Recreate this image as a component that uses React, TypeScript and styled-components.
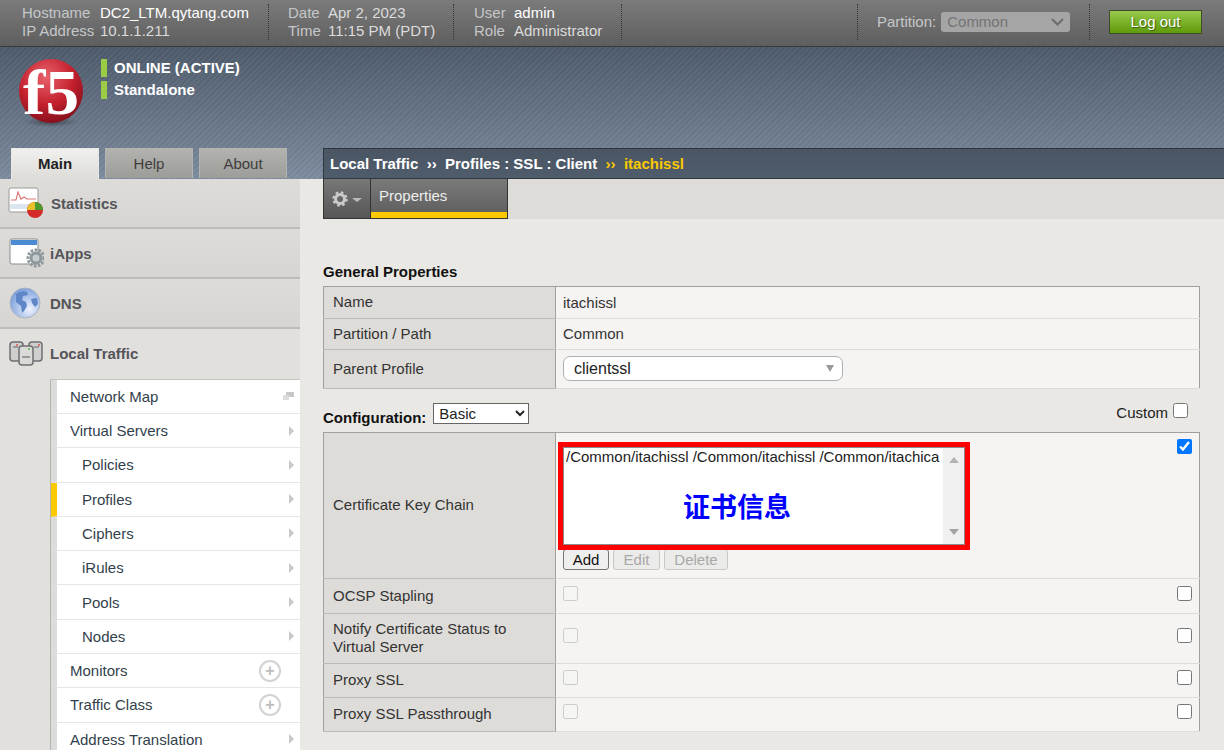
import React from 'react';
import styled, { createGlobalStyle } from 'styled-components';

const GlobalStyle = createGlobalStyle`
    html, body {
        margin: 0;
        padding: 0;
        height: 100%;
        overflow: hidden;
    }
    body {
        font-family: "Liberation Sans", Arial, sans-serif;
        font-size: 15px;
        color: #333;
    }
`;

const Page = styled.div`
    width: 1224px;
    height: 750px;
    overflow: hidden;
    display: flex;
    flex-direction: column;
    background: #e9e8e4;
`;

/* top bar */
const TopBar = styled.header`
    height: 47px;
    flex: none;
    box-sizing: border-box;
    display: flex;
    align-items: center;
    padding: 0 22px 3px 0;
    background: linear-gradient(#7b7b7b, #5e5e5e);
    border-bottom: 1px solid #3a3a3a;
    color: #d6d6d6;
`;

const InfoBlock = styled.div<{ $width: number; $pad: number; $keyWidth: number }>`
    width: ${(p) => p.$width}px;
    height: 36px;
    box-sizing: border-box;
    padding-left: ${(p) => p.$pad}px;
    border-right: 1px dotted #333;
    display: grid;
    grid-template-columns: ${(p) => p.$keyWidth}px auto;
    align-content: center;
    line-height: 18px;
    white-space: nowrap;
`;

const InfoKey = styled.span`
    color: #c4c7c9;
`;

const InfoVal = styled.span<{ $bright?: boolean }>`
    color: ${(p) => (p.$bright ? '#fff' : '#dcdcdc')};
`;

const Spacer = styled.div`
    flex: 1;
`;

const PartitionBlock = styled.div`
    width: 233px;
    height: 36px;
    box-sizing: border-box;
    padding-left: 19px;
    border-left: 1px dotted #333;
    border-right: 1px dotted #333;
    display: flex;
    align-items: center;
    gap: 5px;
    color: #c4c7c9;
`;

const PartitionSelect = styled.div`
    width: 129px;
    height: 20px;
    box-sizing: border-box;
    padding: 0 6px;
    border-radius: 3px;
    background: #a5a5a5;
    color: #747474;
    display: flex;
    align-items: center;
    justify-content: space-between;
`;

const LogoutButton = styled.button`
    width: 93px;
    height: 24px;
    margin-left: 19px;
    padding: 0;
    border: 1px solid #3f4a2b;
    background: linear-gradient(#97c94e, #5f9a08);
    color: #fff;
    font: 15px "Liberation Sans", Arial, sans-serif;
    text-shadow: 1px 1px 1px #3d5a10;
`;

/* banner */
const Banner = styled.div`
    height: 132px;
    flex: none;
    box-sizing: border-box;
    display: flex;
    flex-direction: column;
    justify-content: space-between;
    background:
        repeating-linear-gradient(135deg, rgba(255, 255, 255, 0.03) 0 2px, rgba(0, 0, 0, 0.03) 2px 4px),
        linear-gradient(#4e5b6c, #7d8c9f);
`;

const BannerTop = styled.div`
    display: flex;
    padding: 12px 0 0 18px;
`;

const StatusList = styled.div`
    margin-left: 17px;
    display: flex;
    flex-direction: column;
    gap: 4px;
`;

const StatusLine = styled.div`
    height: 18px;
    line-height: 18px;
    border-left: 6px solid #9ccc43;
    padding-left: 7px;
    color: #fff;
    font-weight: bold;
`;

const BannerBottom = styled.div`
    display: flex;
    align-items: flex-end;
`;

const Tabs = styled.nav`
    width: 323px;
    flex: none;
    box-sizing: border-box;
    padding-left: 11px;
    display: flex;
    gap: 6px;
`;

const Tab = styled.div<{ $active?: boolean }>`
    width: 88px;
    height: ${(p) => (p.$active ? 31 : 30)}px;
    box-sizing: border-box;
    text-align: center;
    line-height: 30px;
    font-size: 15px;
    border: 1px solid ${(p) => (p.$active ? '#e8e7e3' : '#b3b3af')};
    border-bottom: 0;
    background: ${(p) => (p.$active ? 'linear-gradient(#f0f0ee, #dddcd8)' : 'linear-gradient(#b2b2ae, #9c9c98)')};
    color: ${(p) => (p.$active ? '#222' : '#3e3e3e')};
    font-weight: ${(p) => (p.$active ? 'bold' : 'normal')};
`;

const Breadcrumb = styled.div`
    flex: 1;
    height: 31px;
    box-sizing: border-box;
    border: 1px solid #2e3640;
    border-right: 0;
    padding-left: 6px;
    background: linear-gradient(#4a5664, #4f5c6b);
    color: #fff;
    font-weight: bold;
    line-height: 29px;
    white-space: pre;
`;

const Current = styled.span`
    color: #fbc900;
`;

/* body */
const Body = styled.div`
    flex: 1;
    display: flex;
    min-height: 0;
`;

const Sidebar = styled.aside`
    width: 300px;
    flex: none;
    background: #e1e0dc;
`;

const NavSection = styled.div<{ $open?: boolean }>`
    height: 50px;
    box-sizing: border-box;
    display: flex;
    align-items: center;
    gap: 6px;
    padding: 0 0 ${(p) => (p.$open ? '2px' : '0')} 8px;
    border-bottom: ${(p) => (p.$open ? '0' : '2px solid #bdbcb8')};
    background: ${(p) => (p.$open ? '#e1e0dc' : 'linear-gradient(#dddcd8, #d6d5d1)')};
    color: #55545a;
    font-weight: bold;
`;

const SubNav = styled.ul`
    margin: -0.4px 0 0 50px;
    padding: 0;
    list-style: none;
    background: #fff;
    border-top: 1px solid #c4c4c4;
    border-left: 1px solid #b4b4b0;
`;

const SubItem = styled.li<{ $indent?: boolean; $selected?: boolean }>`
    height: 34.3px;
    box-sizing: border-box;
    display: flex;
    align-items: center;
    justify-content: space-between;
    padding: 0 6px 0 ${(p) => (p.$indent ? 25 : 13)}px;
    border-left: 6px solid ${(p) => (p.$selected ? '#fbc900' : '#dcdcdc')};
    border-bottom: 1px solid #e6e6e6;
    color: #333f4c;
`;

const Arrow = styled.span`
    width: 0;
    height: 0;
    border-left: 5px solid #c8c8c8;
    border-top: 5px solid transparent;
    border-bottom: 5px solid transparent;
`;

const PlusCircle = styled.span`
    width: 22px;
    height: 22px;
    margin-right: 13px;
    box-sizing: border-box;
    border: 2px solid #d2d2d2;
    border-radius: 50%;
    color: #bdbdbd;
    font-size: 16px;
    font-weight: bold;
    line-height: 17px;
    text-align: center;
`;

const Main = styled.main`
    flex: 1;
    min-width: 0;
    padding-left: 23px;
    background: #e9e8e4;
`;

const SubTabs = styled.div`
    height: 40px;
    display: flex;
    background: #dedcd8;
`;

const GearTab = styled.div`
    width: 48px;
    box-sizing: border-box;
    display: flex;
    align-items: center;
    justify-content: center;
    gap: 4px;
    background: linear-gradient(#787878, #565656);
    border: 1px solid #333;
    border-top: 0;
`;

const PropTab = styled.div`
    width: 137px;
    box-sizing: border-box;
    padding: 8px 0 0 8px;
    background: linear-gradient(#7a7a7a, #5c5c5c);
    border: 1px solid #333;
    border-top: 0;
    border-left: 0;
    box-shadow: inset 0 -6px 0 #fbc900;
    color: #eee;
    line-height: 18px;
`;

const Content = styled.div`
    width: 877px;
    padding-top: 44px;
`;

const SectionTitle = styled.div`
    height: 23px;
    line-height: 18px;
    font-weight: bold;
    color: #111;
`;

const ConfigBar = styled.div`
    height: 43px;
    display: flex;
    align-items: flex-start;
    padding-top: 14px;
    box-sizing: border-box;
`;

const ConfigLabel = styled.span`
    margin-top: 6px;
    font-weight: bold;
    color: #111;
`;

const ConfigSelect = styled.select`
    width: 96px;
    height: 21px;
    margin-left: 7px;
    padding: 0 0 0 1px;
    background: #fff;
    border: 1px solid #666;
    color: #222;
    font: 15px "Liberation Sans", Arial, sans-serif;
`;

const CustomBox = styled.label`
    margin-left: auto;
    margin-top: 1px;
    display: flex;
    align-items: center;
    color: #222;
`;

const Check = styled.input`
    width: 15px;
    height: 15px;
    margin: 0;
    display: block;
`;

const CustomCheck = styled(Check)`
    margin: -4px 12px 0 5px;
`;

const ChainCheck = styled(Check)`
    margin-top: -3px;
`;

const PropTable = styled.table`
    width: 100%;
    border-collapse: collapse;
    border: 1px solid #a0a09d;
    table-layout: fixed;
`;

const Row = styled.tr<{ $h: number }>`
    height: ${(p) => p.$h}px;
`;

const LabelCell = styled.td`
    width: 232px;
    box-sizing: border-box;
    padding: 0 9px 1px;
    background: #dedcd8;
    border-right: 1px solid #a0a09d;
    border-bottom: 1px solid #bcbbb7;
    line-height: 18px;
    color: #333;
`;

const ValueCell = styled.td`
    position: relative;
    padding: 0 7px 1px;
    background: #f5f4f2;
    border-bottom: 1px solid #dedcd8;
    color: #333;
`;

const ValueSplit = styled.div`
    display: flex;
    align-items: center;
    justify-content: space-between;
    padding-bottom: 5px;
`;

const ProfileSelect = styled.div`
    width: 280px;
    height: 25px;
    box-sizing: border-box;
    padding: 0 8px 0 10px;
    background: #fff;
    border: 1px solid #b0b0b0;
    border-radius: 7px;
    font-size: 16px;
    color: #222;
    display: flex;
    align-items: center;
    justify-content: space-between;
`;

const SmallDown = styled.span`
    width: 0;
    height: 0;
    border-top: 7px solid #9a9a9a;
    border-left: 4px solid transparent;
    border-right: 4px solid transparent;
`;

const ChainCell = styled.div`
    display: flex;
    justify-content: space-between;
    align-items: flex-start;
    padding: 9px 0 0 0;
    height: 144px;
    box-sizing: border-box;
`;

const RedFrame = styled.div`
    width: 412px;
    height: 108px;
    box-sizing: border-box;
    margin-left: -5px;
    border: 5px solid #ff0000;
    background: #fff;
    display: flex;
    position: relative;
`;

const ChainList = styled.div`
    flex: 1;
    min-width: 0;
    padding: 0 0 0 2px;
    border: 1px solid #8c8c8c;
    border-right: 0;
    overflow: hidden;
    white-space: nowrap;
    color: #222;
    line-height: 18px;
`;

const ChainScroll = styled.div`
    width: 22px;
    border: 1px solid #8c8c8c;
    border-left: 0;
    background: #f0f0f0;
    display: flex;
    flex-direction: column;
    align-items: center;
    justify-content: space-between;
    padding: 9px 0;
    box-sizing: border-box;
`;

const ScrollUp = styled.span`
    width: 0;
    height: 0;
    border-bottom: 6px solid #b4b4b4;
    border-left: 5px solid transparent;
    border-right: 5px solid transparent;
`;

const ScrollDown = styled.span`
    width: 0;
    height: 0;
    border-top: 6px solid #a4a4a4;
    border-left: 5px solid transparent;
    border-right: 5px solid transparent;
`;

const Annotation = styled.span`
    position: absolute;
    left: 120px;
    top: 43px;
    color: #0000ff;
    font: bold 27px "Noto Sans CJK SC", sans-serif;
    line-height: 32px;
`;

const ButtonRow = styled.div`
    display: flex;
    gap: 4px;
    margin-top: -1px;
`;

const SmallButton = styled.button<{ $w: number }>`
    width: ${(p) => p.$w}px;
    height: 21px;
    padding: 0;
    box-sizing: border-box;
    background: #efefef;
    border: 1px solid #767676;
    border-radius: 3px;
    color: #111;
    font: 15px "Liberation Sans", Arial, sans-serif;

    &:disabled {
        border-color: #c8c8c8;
        color: #a8a8a8;
        background: #ebebe9;
    }
`;

const ChainStack = styled.div`
    display: flex;
    flex-direction: column;
`;

const F5Logo = () => (
    <svg width="66" height="68" viewBox="0 0 66 68" overflow="visible">
        <defs>
            <radialGradient id="ball" cx="0.42" cy="0.28" r="0.78">
                <stop offset="0" stopColor="#e8636c" />
                <stop offset="0.55" stopColor="#c4202e" />
                <stop offset="1" stopColor="#7e0d19" />
            </radialGradient>
            <radialGradient id="shade" cx="0.5" cy="0.5" r="0.5">
                <stop offset="0" stopColor="#222" stopOpacity="0.55" />
                <stop offset="1" stopColor="#222" stopOpacity="0" />
            </radialGradient>
        </defs>
        <ellipse cx="33" cy="63" rx="27" ry="5" fill="url(#shade)" />
        <circle cx="33" cy="32" r="32" fill="url(#ball)" />
        <text x="5" y="55" fontFamily="'Liberation Serif', serif" fontWeight="bold" fontSize="64" fill="#fff" textLength="56" lengthAdjust="spacingAndGlyphs">f5</text>
    </svg>
);

const StatsIcon = () => (
    <svg width="37" height="32" viewBox="0 0 37 32">
        <rect x="1" y="1" width="29" height="24" rx="2" fill="#fff" stroke="#9a9a9a" />
        <rect x="2" y="17" width="27" height="5" fill="#dbe5ef" />
        <path d="M3 13 L8 13 L10 5 L13 12 L16 10 L19 12 L28 12" fill="none" stroke="#d77" strokeWidth="1.2" />
        <circle cx="27" cy="23" r="8" fill="#d42a2a" />
        <path d="M27 23 L27 15 A8 8 0 0 1 35 23 Z" fill="#4a9a2e" />
        <path d="M27 23 L19 23 A8 8 0 0 1 27 15 Z" fill="#e8c12a" />
    </svg>
);

const AppsIcon = () => (
    <svg width="36" height="32" viewBox="0 0 36 32">
        <rect x="2" y="2" width="28" height="25" rx="2" fill="#fff" stroke="#8d8d8d" />
        <rect x="3" y="3" width="26" height="5" fill="#4a8bd4" />
        <circle cx="28" cy="21" r="8" fill="none" stroke="#8e979b" strokeWidth="3" strokeDasharray="2.6 1.4" />
        <circle cx="28" cy="21" r="5" fill="#c7ccce" stroke="#8e979b" strokeWidth="3" />
    </svg>
);

const GlobeIcon = () => (
    <svg width="36" height="32" viewBox="0 0 36 32">
        <defs>
            <radialGradient id="globe" cx="0.65" cy="0.7" r="0.8">
                <stop offset="0" stopColor="#eef3fd" />
                <stop offset="1" stopColor="#6f97d8" />
            </radialGradient>
        </defs>
        <circle cx="17" cy="16" r="15" fill="url(#globe)" stroke="#aab4c4" />
        <path d="M8 7 Q13 3 19 5 L20 8 L15 9 L14 13 L18 15 L19 19 L16 24 L14 26 L13 19 L8 15 Z" fill="#5f87c8" />
        <path d="M23 12 L29 11 L30 17 L27 20 L24 16 Z" fill="#5f87c8" />
    </svg>
);

const ServersIcon = () => (
    <svg width="36" height="32" viewBox="0 0 36 32">
        <rect x="2" y="5" width="13" height="19" rx="3" fill="#cfcfcd" stroke="#6f6f72" strokeWidth="1.5" />
        <rect x="21" y="5" width="13" height="19" rx="3" fill="#cfcfcd" stroke="#6f6f72" strokeWidth="1.5" />
        <rect x="11" y="9" width="14" height="19" rx="3" fill="#dadad8" stroke="#6f6f72" strokeWidth="1.5" />
        <rect x="5" y="9" width="5" height="2" fill="#999" />
        <rect x="14" y="19" width="8" height="2" fill="#999" />
        <rect x="26" y="9" width="5" height="2" fill="#999" />
        <circle cx="9" cy="8" r="1" fill="#d55" />
        <circle cx="21" cy="12" r="1" fill="#5b5" />
        <circle cx="31" cy="8" r="1" fill="#d55" />
    </svg>
);

const GearIcon = () => (
    <svg width="16" height="16" viewBox="0 0 16 16">
        <circle cx="8" cy="8" r="4.5" fill="none" stroke="#c9c9c9" strokeWidth="3" />
        <circle cx="8" cy="8" r="6.5" fill="none" stroke="#c9c9c9" strokeWidth="2.4" strokeDasharray="2.6 2.5" />
    </svg>
);

const Caret = styled.span`
    width: 0;
    height: 0;
    margin-top: 3px;
    border-top: 4px solid #bbb;
    border-left: 5px solid transparent;
    border-right: 5px solid transparent;
`;

const ChevronDown = ({ color }: { color: string }) => (
    <svg width="13" height="8" viewBox="0 0 13 8">
        <path d="M1 1 L6.5 6.5 L12 1" fill="none" stroke={color} strokeWidth="2" />
    </svg>
);

const MapIcon = () => (
    <svg width="11" height="8" viewBox="0 0 11 8">
        <rect x="3" y="0" width="8" height="5" fill="#c8c8c8" />
        <rect x="0" y="3" width="6" height="5" fill="#dcdcdc" />
    </svg>
);

const subItems = [
    { label: 'Network Map', icon: 'map' },
    { label: 'Virtual Servers', icon: 'arrow' },
    { label: 'Policies', icon: 'arrow', indent: true },
    { label: 'Profiles', icon: 'arrow', indent: true, selected: true },
    { label: 'Ciphers', icon: 'arrow', indent: true },
    { label: 'iRules', icon: 'arrow', indent: true },
    { label: 'Pools', icon: 'arrow', indent: true },
    { label: 'Nodes', icon: 'arrow', indent: true },
    { label: 'Monitors', icon: 'plus' },
    { label: 'Traffic Class', icon: 'plus' },
    { label: 'Address Translation', icon: 'arrow' },
];

const optionRows = [
    { label: 'OCSP Stapling', h: 35 },
    { label: 'Notify Certificate Status to Virtual Server', h: 50 },
    { label: 'Proxy SSL', h: 34 },
    { label: 'Proxy SSL Passthrough', h: 34 },
];

const App = () => {
    return (
        <Page>
            <GlobalStyle />
            <TopBar>
                <InfoBlock $width={269} $pad={22} $keyWidth={78}>
                    <InfoKey>Hostname</InfoKey>
                    <InfoVal $bright>DC2_LTM.qytang.com</InfoVal>
                    <InfoKey>IP Address</InfoKey>
                    <InfoVal>10.1.1.211</InfoVal>
                </InfoBlock>
                <InfoBlock $width={185} $pad={19} $keyWidth={40}>
                    <InfoKey>Date</InfoKey>
                    <InfoVal>Apr 2, 2023</InfoVal>
                    <InfoKey>Time</InfoKey>
                    <InfoVal>11:15 PM (PDT)</InfoVal>
                </InfoBlock>
                <InfoBlock $width={168} $pad={20} $keyWidth={40}>
                    <InfoKey>User</InfoKey>
                    <InfoVal $bright>admin</InfoVal>
                    <InfoKey>Role</InfoKey>
                    <InfoVal>Administrator</InfoVal>
                </InfoBlock>
                <Spacer />
                <PartitionBlock>
                    Partition:
                    <PartitionSelect>
                        Common
                        <ChevronDown color="#6c6c6c" />
                    </PartitionSelect>
                </PartitionBlock>
                <LogoutButton>Log out</LogoutButton>
            </TopBar>
            <Banner>
                <BannerTop>
                    <F5Logo />
                    <StatusList>
                        <StatusLine>ONLINE (ACTIVE)</StatusLine>
                        <StatusLine>Standalone</StatusLine>
                    </StatusList>
                </BannerTop>
                <BannerBottom>
                    <Tabs>
                        <Tab $active>Main</Tab>
                        <Tab>Help</Tab>
                        <Tab>About</Tab>
                    </Tabs>
                    <Breadcrumb>
                        {'Local Traffic  ››  Profiles : SSL : Client  '}
                        <Current>{'››  itachissl'}</Current>
                    </Breadcrumb>
                </BannerBottom>
            </Banner>
            <Body>
                <Sidebar>
                    <NavSection><StatsIcon />Statistics</NavSection>
                    <NavSection><AppsIcon />iApps</NavSection>
                    <NavSection><GlobeIcon />DNS</NavSection>
                    <NavSection $open><ServersIcon />Local Traffic</NavSection>
                    <SubNav>
                        {subItems.map((item) => (
                            <SubItem key={item.label} $indent={item.indent} $selected={item.selected}>
                                {item.label}
                                {item.icon === 'arrow' && <Arrow />}
                                {item.icon === 'plus' && <PlusCircle>+</PlusCircle>}
                                {item.icon === 'map' && <MapIcon />}
                            </SubItem>
                        ))}
                    </SubNav>
                </Sidebar>
                <Main>
                    <SubTabs>
                        <GearTab><GearIcon /><Caret /></GearTab>
                        <PropTab>Properties</PropTab>
                    </SubTabs>
                    <Content>
                        <SectionTitle>General Properties</SectionTitle>
                        <PropTable>
                            <tbody>
                                <Row $h={32}>
                                    <LabelCell>Name</LabelCell>
                                    <ValueCell>itachissl</ValueCell>
                                </Row>
                                <Row $h={31}>
                                    <LabelCell>Partition / Path</LabelCell>
                                    <ValueCell>Common</ValueCell>
                                </Row>
                                <Row $h={39}>
                                    <LabelCell>Parent Profile</LabelCell>
                                    <ValueCell>
                                        <ProfileSelect>clientssl<SmallDown /></ProfileSelect>
                                    </ValueCell>
                                </Row>
                            </tbody>
                        </PropTable>
                        <ConfigBar>
                            <ConfigLabel>Configuration:</ConfigLabel>
                            <ConfigSelect defaultValue="Basic">
                                <option>Basic</option>
                                <option>Advanced</option>
                            </ConfigSelect>
                            <CustomBox>Custom<CustomCheck type="checkbox" /></CustomBox>
                        </ConfigBar>
                        <PropTable>
                            <tbody>
                                <Row $h={146}>
                                    <LabelCell>Certificate Key Chain</LabelCell>
                                    <ValueCell>
                                        <ChainCell>
                                            <ChainStack>
                                                <RedFrame>
                                                    <ChainList>/Common/itachissl /Common/itachissl /Common/itachica</ChainList>
                                                    <ChainScroll><ScrollUp /><ScrollDown /></ChainScroll>
                                                    <Annotation>证书信息</Annotation>
                                                </RedFrame>
                                                <ButtonRow>
                                                    <SmallButton $w={46}>Add</SmallButton>
                                                    <SmallButton $w={47} disabled>Edit</SmallButton>
                                                    <SmallButton $w={64} disabled>Delete</SmallButton>
                                                </ButtonRow>
                                            </ChainStack>
                                            <ChainCheck type="checkbox" defaultChecked />
                                        </ChainCell>
                                    </ValueCell>
                                </Row>
                                {optionRows.map((row) => (
                                    <Row key={row.label} $h={row.h}>
                                        <LabelCell>{row.label}</LabelCell>
                                        <ValueCell>
                                            <ValueSplit>
                                                <Check type="checkbox" disabled />
                                                <Check type="checkbox" />
                                            </ValueSplit>
                                        </ValueCell>
                                    </Row>
                                ))}
                            </tbody>
                        </PropTable>
                    </Content>
                </Main>
            </Body>
        </Page>
    );
};

export default App;
